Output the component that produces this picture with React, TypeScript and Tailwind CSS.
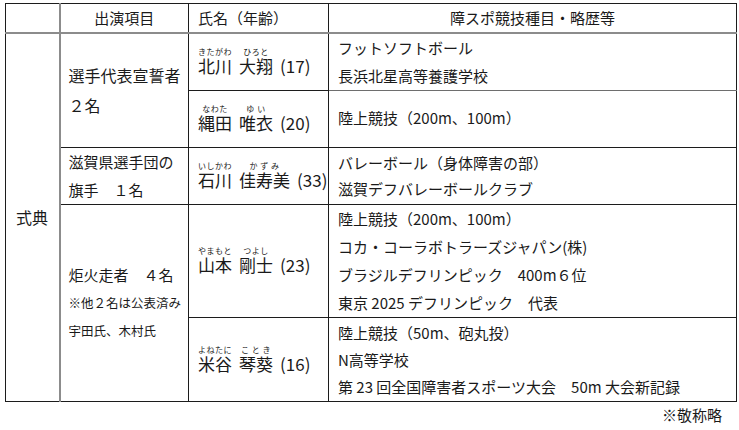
import type { ReactNode } from "react"

type RubyProps = {
  base: string
  reading: string
}

function Ruby({ base, reading }: RubyProps) {
  return (
    <span className="inline-flex shrink-0 flex-col items-center whitespace-nowrap">
      <span className="text-[8px] leading-[9px] tracking-[0.5px]">{reading}</span>
      <span className="leading-[20px]">{base}</span>
    </span>
  )
}

function Name({ children, age }: { children: ReactNode; age: string }) {
  return (
    <div className="flex items-end gap-[7px] whitespace-nowrap text-[17px]">
      {children}
      <span className="shrink-0 leading-[20px]">({age})</span>
    </div>
  )
}

const cell = "border border-[#1c1c1c] align-middle"

export default function App() {
  return (
    <div className="h-[430px] w-[739px] bg-white pl-[5px] pt-[3px] font-['Noto_Sans_CJK_JP','Noto_Sans',sans-serif] text-[#1a1a1a]">
      <table className="w-[731px] table-fixed border-collapse">
        <colgroup>
          <col className="w-[54px]" />
          <col className="w-[129px]" />
          <col className="w-[140px]" />
          <col className="w-[408px]" />
        </colgroup>
        <tbody>
          <tr className="h-[29px] text-[15px]">
            <td className={`${cell} border-b-2 border-r-2 border-b-[#8c8c8c] border-r-[#8c8c8c]`}></td>
            <td className={`${cell} border-b-2 border-b-[#8c8c8c] text-center`}>出演項目</td>
            <td className={`${cell} border-b-2 border-b-[#8c8c8c] pl-[9px]`}>氏名（年齢）</td>
            <td className={`${cell} border-b-2 border-b-[#8c8c8c] text-center`}>障スポ競技種目・略歴等</td>
          </tr>

          <tr className="h-[56px]">
            <td rowSpan={5} className={`${cell} border-r-2 border-r-[#8c8c8c] pl-[10px] text-[16px]`}>
              式典
            </td>
            <td rowSpan={2} className={`${cell} pl-[8px] text-[16px] leading-[30px]`}>
              <div>選手代表宣誓者</div>
              <div>２名</div>
            </td>
            <td className={`${cell} pl-[9px]`}>
              <Name age="17">
                <Ruby base="北川" reading="きたがわ" />
                <Ruby base="大翔" reading="ひろと" />
              </Name>
            </td>
            <td className={`${cell} border-b-[#6e6e6e] pl-[9px] text-[15px] leading-[28px]`}>
              <div>フットソフトボール</div>
              <div>長浜北星高等養護学校</div>
            </td>
          </tr>

          <tr className="h-[57px]">
            <td className={`${cell} pl-[9px]`}>
              <Name age="20">
                <Ruby base="縄田" reading="なわた" />
                <Ruby base="唯衣" reading="ゆ い" />
              </Name>
            </td>
            <td className={`${cell} pl-[9px] text-[15px]`}>陸上競技（200m、100m）</td>
          </tr>

          <tr className="h-[56px]">
            <td className={`${cell} pl-[8px] text-[15px] leading-[28px]`}>
              <div>滋賀県選手団の</div>
              <div>旗手　１名</div>
            </td>
            <td className={`${cell} pl-[9px]`}>
              <Name age="33">
                <Ruby base="石川" reading="いしかわ" />
                <Ruby base="佳寿美" reading="か ず み" />
              </Name>
            </td>
            <td className={`${cell} pl-[9px] text-[15px] leading-[26px]`}>
              <div>バレーボール（身体障害の部）</div>
              <div>滋賀デフバレーボールクラブ</div>
            </td>
          </tr>

          <tr className="h-[113px]">
            <td rowSpan={2} className={`${cell} pl-[8px] leading-[28px]`}>
              <div className="text-[15px]">炬火走者　４名</div>
              <div className="text-[12.5px]">※他２名は公表済み</div>
              <div className="text-[12.5px]">宇田氏、木村氏</div>
            </td>
            <td className={`${cell} pl-[9px]`}>
              <Name age="23">
                <Ruby base="山本" reading="やまもと" />
                <Ruby base="剛士" reading="つよし" />
              </Name>
            </td>
            <td className={`${cell} pl-[9px] text-[15px] leading-[28px]`}>
              <div>陸上競技（200m、100m）</div>
              <div>コカ・コーラボトラーズジャパン(株)</div>
              <div>ブラジルデフリンピック　400m６位</div>
              <div>東京 2025 デフリンピック　代表</div>
            </td>
          </tr>

          <tr className="h-[84px]">
            <td className={`${cell} pl-[9px]`}>
              <Name age="16">
                <Ruby base="米谷" reading="よねたに" />
                <Ruby base="琴葵" reading="こ と き" />
              </Name>
            </td>
            <td className={`${cell} pl-[9px] text-[15px] leading-[27px]`}>
              <div>陸上競技（50m、砲丸投）</div>
              <div>N高等学校</div>
              <div>第 23 回全国障害者スポーツ大会　50m 大会新記録</div>
            </td>
          </tr>
        </tbody>
      </table>
      <div className="w-[731px] pr-[14px] pt-[2px] text-right text-[15px] leading-[22px]">※敬称略</div>
    </div>
  )
}
